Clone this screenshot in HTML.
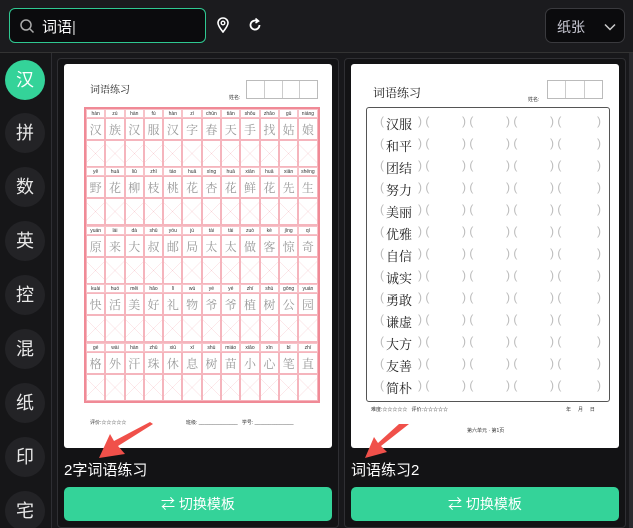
<!DOCTYPE html>
<html><head><meta charset="utf-8"><style>
*{box-sizing:border-box;margin:0;padding:0}
html,body{width:633px;height:528px;overflow:hidden}
body{background:#18181b;font-family:"Liberation Sans","Noto Sans CJK SC",sans-serif;position:relative;color:#fff}
.hdr{position:absolute;left:0;top:0;width:633px;height:53px;background:#1b1b1e;border-bottom:1px solid #333}
.search{position:absolute;left:9px;top:8px;width:197px;height:35px;border:1px solid #2fc891;border-radius:6px;background:#0b0b0d}
.search span{position:absolute;left:32px;top:7px;font-size:15px;color:#fff}
.sel{position:absolute;left:545px;top:8px;width:80px;height:35px;border:1px solid #3a3a3e;border-radius:7px;background:#0b0b0d}
.sel span{position:absolute;left:11px;top:8px;font-size:14px;color:#c9c9d4}
.side{position:absolute;left:0;top:53px;width:52px;height:475px;border-right:1px solid #2e2e33;background:#161618}
.c{position:absolute;left:5px;width:40px;height:40px;border-radius:50%;background:#232326;color:#e8e8e8;font-size:18px;text-align:center;line-height:40px}
.card{position:absolute;top:58px;width:282px;height:470px;border:1px solid #2f2f33;border-radius:4px;background:#131315;overflow:hidden}
.paper{position:absolute;left:6px;top:5px;width:268px;height:384px;background:#fff;border-radius:3px;overflow:hidden}
.ttl{position:absolute;left:6px;top:400px;font-size:15px;color:#fff}
.btn{position:absolute;left:6px;top:428px;width:268px;height:34px;background:#34d399;border-radius:5px;color:#fff;font-size:14px;text-align:center;line-height:34px}
.grid{position:absolute;left:20px;top:43px;width:236px;height:296px;border:2px solid #f08a96}
.blk{height:58.4px;border-bottom:1px solid #f5b5bd}
.py,.ch,.pr{display:flex}
.py div{width:19.3px;height:9px;font-size:5px;color:#333;text-align:center;border:0.5px solid #f7c2c8;line-height:9px}
.ch div{width:19.3px;height:22px;font-size:12px;color:#999;text-align:center;line-height:22px;border:0.5px solid #f5b5bd;font-family:"Noto Serif CJK SC",serif}
.pr div{width:19.3px;height:27px;border:0.5px solid #f5b5bd;background:linear-gradient(45deg,transparent 49%,#f8d0d5 50%,transparent 51%),linear-gradient(-45deg,transparent 49%,#f8d0d5 50%,transparent 51%),linear-gradient(#fff 0 0)}
.box{position:absolute;left:15px;top:43px;width:244px;height:295px;border:1.5px solid #555;border-radius:3px}
.row{position:absolute;left:0;width:240px;height:20px;font-size:13px;color:#222;font-family:"Noto Serif CJK SC",serif}
.row span{position:absolute;top:0;color:#bbb;font-size:12px;font-family:"Liberation Sans",sans-serif}
.row b{position:absolute;left:19px;top:0;font-weight:normal}
.sm{position:absolute;font-size:5px;color:#333}
</style></head><body>
<div class="hdr">
 <div class="search"><svg width="16" height="16" style="position:absolute;left:9px;top:9px" viewBox="0 0 16 16"><circle cx="7" cy="7" r="5" fill="none" stroke="#aaa" stroke-width="1.5"/><path d="M11 11l3.5 3.5" stroke="#aaa" stroke-width="1.5"/></svg><span>词语<b style="font-weight:normal;color:#ccc">|</b></span></div>
 <svg width="14" height="16" style="position:absolute;left:216px;top:17px" viewBox="0 0 14 16"><path d="M7 15C3 10 2 8 2 6a5 5 0 0 1 10 0c0 2-1 4-5 9z" fill="none" stroke="#fff" stroke-width="1.6"/><circle cx="7" cy="6" r="1.8" fill="none" stroke="#fff" stroke-width="1.4"/></svg>
 <svg width="16" height="16" style="position:absolute;left:247px;top:17px" viewBox="0 0 16 16"><path d="M12.5 8a4.5 4.5 0 1 1-2-3.7" fill="none" stroke="#fff" stroke-width="1.8"/><path d="M8.5 1.5l3 2.5-3 2" fill="none" stroke="#fff" stroke-width="1.6"/></svg>
 <div class="sel"><span>纸张</span><svg width="12" height="8" style="position:absolute;left:58px;top:14px" viewBox="0 0 12 8"><path d="M1 1.5l5 5 5-5" fill="none" stroke="#ccc" stroke-width="1.5"/></svg></div>
</div>
<div class="side">
 <div class="c" style="top:7px;background:#34d399;color:#fff">汉</div>
 <div class="c" style="top:60px">拼</div>
 <div class="c" style="top:114px">数</div>
 <div class="c" style="top:168px">英</div>
 <div class="c" style="top:222px">控</div>
 <div class="c" style="top:276px">混</div>
 <div class="c" style="top:330px">纸</div>
 <div class="c" style="top:384px">印</div>
 <div class="c" style="top:438px">宅</div>
</div>
<div style="position:absolute;right:0;top:53px;width:4px;height:475px;background:#2a2a2e"></div>

<div class="card" style="left:57px">
 <div class="paper">
  <div style="position:absolute;left:26px;top:17px;font-size:10px;color:#222;font-family:'Noto Serif CJK SC',serif">词语练习</div>
  <div class="sm" style="left:165px;top:30px">姓名:</div>
  <div style="position:absolute;left:182px;top:16px;width:72px;height:19px;border:1px solid #bbb;display:flex"><div style="flex:1;border-right:1px solid #ccc"></div><div style="flex:1;border-right:1px solid #ccc"></div><div style="flex:1;border-right:1px solid #ccc"></div><div style="flex:1"></div></div>
  <div class="grid">
   <div class="blk"><div class="py"><div>hàn</div><div>zú</div><div>hàn</div><div>fú</div><div>hàn</div><div>zì</div><div>chūn</div><div>tiān</div><div>shǒu</div><div>zhǎo</div><div>gū</div><div>niáng</div></div><div class="ch"><div>汉</div><div>族</div><div>汉</div><div>服</div><div>汉</div><div>字</div><div>春</div><div>天</div><div>手</div><div>找</div><div>姑</div><div>娘</div></div><div class="pr"><div></div><div></div><div></div><div></div><div></div><div></div><div></div><div></div><div></div><div></div><div></div><div></div></div></div>
   <div class="blk"><div class="py"><div>yě</div><div>huā</div><div>liǔ</div><div>zhī</div><div>táo</div><div>huā</div><div>xìng</div><div>huā</div><div>xiān</div><div>huā</div><div>xiān</div><div>shēng</div></div><div class="ch"><div>野</div><div>花</div><div>柳</div><div>枝</div><div>桃</div><div>花</div><div>杏</div><div>花</div><div>鲜</div><div>花</div><div>先</div><div>生</div></div><div class="pr"><div></div><div></div><div></div><div></div><div></div><div></div><div></div><div></div><div></div><div></div><div></div><div></div></div></div>
   <div class="blk"><div class="py"><div>yuán</div><div>lái</div><div>dà</div><div>shū</div><div>yóu</div><div>jú</div><div>tài</div><div>tài</div><div>zuò</div><div>kè</div><div>jīng</div><div>qí</div></div><div class="ch"><div>原</div><div>来</div><div>大</div><div>叔</div><div>邮</div><div>局</div><div>太</div><div>太</div><div>做</div><div>客</div><div>惊</div><div>奇</div></div><div class="pr"><div></div><div></div><div></div><div></div><div></div><div></div><div></div><div></div><div></div><div></div><div></div><div></div></div></div>
   <div class="blk"><div class="py"><div>kuài</div><div>huó</div><div>měi</div><div>hǎo</div><div>lǐ</div><div>wù</div><div>yé</div><div>yé</div><div>zhí</div><div>shù</div><div>gōng</div><div>yuán</div></div><div class="ch"><div>快</div><div>活</div><div>美</div><div>好</div><div>礼</div><div>物</div><div>爷</div><div>爷</div><div>植</div><div>树</div><div>公</div><div>园</div></div><div class="pr"><div></div><div></div><div></div><div></div><div></div><div></div><div></div><div></div><div></div><div></div><div></div><div></div></div></div>
   <div class="blk" style="border:0"><div class="py"><div>gé</div><div>wài</div><div>hàn</div><div>zhū</div><div>xiū</div><div>xī</div><div>shù</div><div>miáo</div><div>xiǎo</div><div>xīn</div><div>bǐ</div><div>zhí</div></div><div class="ch"><div>格</div><div>外</div><div>汗</div><div>珠</div><div>休</div><div>息</div><div>树</div><div>苗</div><div>小</div><div>心</div><div>笔</div><div>直</div></div><div class="pr"><div></div><div></div><div></div><div></div><div></div><div></div><div></div><div></div><div></div><div></div><div></div><div></div></div></div>
  </div>
  <div class="sm" style="left:26px;top:355px">评价:☆☆☆☆☆</div>
  <div class="sm" style="left:122px;top:355px">班级: ______________ &nbsp; 学号: ______________</div>
 </div>
 <div class="ttl">2字词语练习</div>
 <div class="btn">⇄ 切换模板</div>
</div>

<div class="card" style="left:344px">
 <div class="paper">
  <div style="position:absolute;left:22px;top:20px;font-size:12px;color:#222;font-family:'Noto Serif CJK SC',serif">词语练习</div>
  <div class="sm" style="left:177px;top:32px">姓名:</div>
  <div style="position:absolute;left:196px;top:16px;width:56px;height:19px;border:1px solid #bbb;display:flex"><div style="flex:1;border-right:1px solid #ccc"></div><div style="flex:1;border-right:1px solid #ccc"></div><div style="flex:1"></div></div>
  <div class="box">
   <div class="row" style="top:6px"><span style="left:13px">(</span><b>汉服</b><span style="left:51px">) (</span><span style="left:95px">) (</span><span style="left:139px">) (</span><span style="left:183px">) (</span><span style="left:230px">)</span></div>
   <div class="row" style="top:28px"><span style="left:13px">(</span><b>和平</b><span style="left:51px">) (</span><span style="left:95px">) (</span><span style="left:139px">) (</span><span style="left:183px">) (</span><span style="left:230px">)</span></div>
   <div class="row" style="top:50px"><span style="left:13px">(</span><b>团结</b><span style="left:51px">) (</span><span style="left:95px">) (</span><span style="left:139px">) (</span><span style="left:183px">) (</span><span style="left:230px">)</span></div>
   <div class="row" style="top:72px"><span style="left:13px">(</span><b>努力</b><span style="left:51px">) (</span><span style="left:95px">) (</span><span style="left:139px">) (</span><span style="left:183px">) (</span><span style="left:230px">)</span></div>
   <div class="row" style="top:94px"><span style="left:13px">(</span><b>美丽</b><span style="left:51px">) (</span><span style="left:95px">) (</span><span style="left:139px">) (</span><span style="left:183px">) (</span><span style="left:230px">)</span></div>
   <div class="row" style="top:116px"><span style="left:13px">(</span><b>优雅</b><span style="left:51px">) (</span><span style="left:95px">) (</span><span style="left:139px">) (</span><span style="left:183px">) (</span><span style="left:230px">)</span></div>
   <div class="row" style="top:138px"><span style="left:13px">(</span><b>自信</b><span style="left:51px">) (</span><span style="left:95px">) (</span><span style="left:139px">) (</span><span style="left:183px">) (</span><span style="left:230px">)</span></div>
   <div class="row" style="top:160px"><span style="left:13px">(</span><b>诚实</b><span style="left:51px">) (</span><span style="left:95px">) (</span><span style="left:139px">) (</span><span style="left:183px">) (</span><span style="left:230px">)</span></div>
   <div class="row" style="top:182px"><span style="left:13px">(</span><b>勇敢</b><span style="left:51px">) (</span><span style="left:95px">) (</span><span style="left:139px">) (</span><span style="left:183px">) (</span><span style="left:230px">)</span></div>
   <div class="row" style="top:204px"><span style="left:13px">(</span><b>谦虚</b><span style="left:51px">) (</span><span style="left:95px">) (</span><span style="left:139px">) (</span><span style="left:183px">) (</span><span style="left:230px">)</span></div>
   <div class="row" style="top:226px"><span style="left:13px">(</span><b>大方</b><span style="left:51px">) (</span><span style="left:95px">) (</span><span style="left:139px">) (</span><span style="left:183px">) (</span><span style="left:230px">)</span></div>
   <div class="row" style="top:248px"><span style="left:13px">(</span><b>友善</b><span style="left:51px">) (</span><span style="left:95px">) (</span><span style="left:139px">) (</span><span style="left:183px">) (</span><span style="left:230px">)</span></div>
   <div class="row" style="top:270px"><span style="left:13px">(</span><b>简朴</b><span style="left:51px">) (</span><span style="left:95px">) (</span><span style="left:139px">) (</span><span style="left:183px">) (</span><span style="left:230px">)</span></div>
  </div>
  <div class="sm" style="left:20px;top:342px">难度:☆☆☆☆☆ &nbsp; 评价:☆☆☆☆☆</div>
  <div class="sm" style="left:215px;top:342px">年 &nbsp; &nbsp; 月 &nbsp; &nbsp; 日</div>
  <div class="sm" style="left:116px;top:363px">第六单元 · 第1页</div>
 </div>
 <div class="ttl">词语练习2</div>
 <div class="btn">⇄ 切换模板</div>
</div>

<svg width="633" height="528" style="position:absolute;left:0;top:0;pointer-events:none">
 <path d="M153 424L118 446l7 8-26 4 11-24 4 7 36-19z" fill="#f0504a"/>
 <path d="M409 424L381 446l6 6-22 6 9-21 4 6 21-19z" fill="#f0504a"/>
</svg>
</body></html>
